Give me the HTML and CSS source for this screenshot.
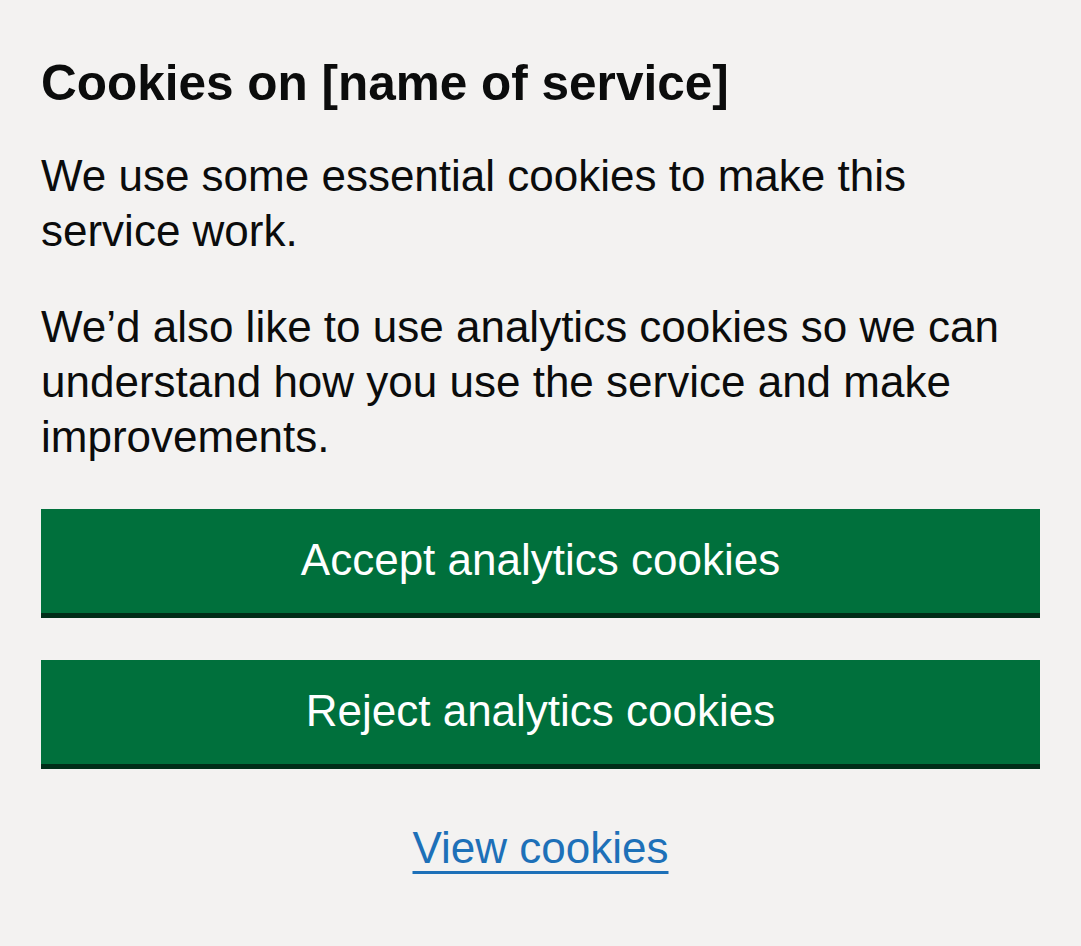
FILE: index.html
```html
<!DOCTYPE html>
<html lang="en">
<head>
<meta charset="utf-8">
<title>Cookies</title>
<link rel="stylesheet" href="styles.css">
</head>
<body>
<div class="banner">
  <h2 class="heading">Cookies on [name of service]</h2>
  <p class="body">We use some essential cookies to make this service work.</p>
  <p class="body">We’d also like to use analytics cookies so we can understand how you use the service and make improvements.</p>
  <div class="actions">
    <button class="btn" type="button">Accept analytics cookies</button>
    <button class="btn" type="button">Reject analytics cookies</button>
    <a class="link" href="#">View cookies</a>
  </div>
</div>
</body>
</html>
```
FILE: styles.css
```css
html, body {
  margin: 0;
  padding: 0;
  background: #f3f2f1;
}
body {
  font-family: "Liberation Sans", Arial, sans-serif;
  color: #0b0c0c;
}
.banner {
  padding: 50px 41px 40px 41px;
}
.heading {
  margin: 0 0 32px 0;
  font-size: 49.5px;
  line-height: 66px;
  font-weight: 700;
}
.body {
  margin: 0 0 41px 0;
  font-size: 44px;
  line-height: 55px;
  max-width: 960px;
}
.actions {
  display: flex;
  flex-direction: column;
  align-items: stretch;
  gap: 42px;
  margin-top: 45px;
}
.btn {
  display: block;
  width: 100%;
  height: 109px;
  border: 0;
  margin: 0;
  padding: 0 0 8px 0;
  background: #00703c;
  box-shadow: inset 0 -5px 0 #002d18;
  color: #ffffff;
  font-family: "Liberation Sans", Arial, sans-serif;
  font-size: 44px;
  line-height: 55px;
  cursor: pointer;
}
.link {
  align-self: center;
  margin-top: 9px;
  color: #1d70b8;
  font-size: 44px;
  line-height: 55px;
  text-decoration: underline;
  text-decoration-thickness: 3px;
  text-underline-offset: 8px;
}
```
